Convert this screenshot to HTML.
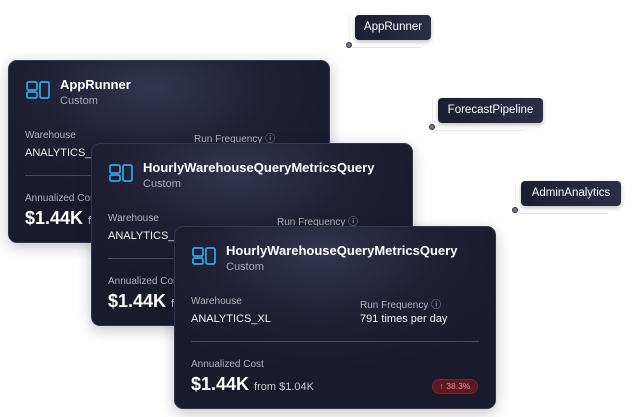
<!DOCTYPE html>
<html><head><style>
*{margin:0;padding:0;box-sizing:border-box}
body{width:635px;height:417px;background:#fff;position:relative;overflow:hidden;font-family:"Liberation Sans",sans-serif}
.card{position:absolute;width:322px;height:183px;border-radius:9px;background:radial-gradient(ellipse 220px 120px at 45% 15%,#33354f 0%,#1e1f33 55%,#191a2b 100%);box-shadow:0 4px 14px rgba(20,20,40,.25);color:#fff;border:1px solid #34364e}
.ic{position:absolute;left:17px;top:20px}
.t{position:absolute;left:51px;top:16px;font-size:13px;font-weight:bold}
.s{position:absolute;left:51px;top:34px;font-size:11px;color:#a6a8b6}
.l{position:absolute;top:69px;font-size:10px;color:#b0b2bf}
.v{position:absolute;top:86px;font-size:11px;color:#f2f2f6}
.hr{position:absolute;left:16px;right:16px;top:114px;height:1px;background:#4a4c62}
.al{position:absolute;left:16px;top:132px;font-size:10px;color:#b0b2bf}
.cost{position:absolute;left:16px;top:147px;font-size:18px;font-weight:bold}
.cost span{font-size:11px;font-weight:normal;color:#c4c5d0}
.badge{position:absolute;left:257px;top:152px;width:46px;height:15px;border-radius:8px;background:#5a1a22;border:1px solid #7a2630;color:#f08a8a;font-size:8.5px;text-align:center;line-height:13px}
.tag{position:absolute;height:25px;border-radius:4px;background:linear-gradient(90deg,#1c1d30,#2c2e48);color:#fff;font-size:11.5px;line-height:25px;text-align:center;box-shadow:0 2px 5px rgba(0,0,0,.25)}
.dot{position:absolute;width:6px;height:6px;border-radius:50%;border:1.5px solid #2a2c45;background:#777}
.vl{position:absolute;width:1px;background:#efeff4}
.hl{position:absolute;height:1px;background:#e6e6ee}
</style></head><body>

<div class="vl" style="left:349px;top:14px;height:30px"></div><div class="hl" style="left:352px;top:47px;width:70px"></div><div class="dot" style="left:346px;top:42px"></div>
<div class="tag" style="left:355px;top:15px;width:76px">AppRunner</div>
<div class="vl" style="left:432px;top:97px;height:30px"></div><div class="hl" style="left:435px;top:130px;width:90px"></div><div class="dot" style="left:429px;top:124px"></div>
<div class="tag" style="left:438px;top:98px;width:105px">ForecastPipeline</div>
<div class="vl" style="left:515px;top:180px;height:30px"></div><div class="hl" style="left:518px;top:213px;width:90px"></div><div class="dot" style="left:512px;top:207px"></div>
<div class="tag" style="left:521px;top:181px;width:100px">AdminAnalytics</div>

<div class="card" style="left:8px;top:60px">
<svg class="ic" width="24" height="18" viewBox="0 0 24 18" fill="none" stroke="#2fa8e8" stroke-width="1.7"><rect x="1" y="1" width="10" height="8" rx="1.5"/><rect x="1" y="11" width="10" height="6" rx="1.5"/><rect x="14" y="1" width="9" height="16" rx="1.5"/></svg>
<div class="t">AppRunner</div><div class="s">Custom</div>
<div class="l" style="left:16px">Warehouse</div><div class="l" style="left:185px">Run Frequency ⓘ</div>
<div class="v" style="left:16px">ANALYTICS_XL</div><div class="v" style="left:185px">791 times per day</div>
<div class="hr"></div><div class="al">Annualized Cost</div>
<div class="cost">$1.44K <span>from $1.04K</span></div>
</div>

<div class="card" style="left:91px;top:143px">
<svg class="ic" width="24" height="18" viewBox="0 0 24 18" fill="none" stroke="#2fa8e8" stroke-width="1.7"><rect x="1" y="1" width="10" height="8" rx="1.5"/><rect x="1" y="11" width="10" height="6" rx="1.5"/><rect x="14" y="1" width="9" height="16" rx="1.5"/></svg>
<div class="t">HourlyWarehouseQueryMetricsQuery</div><div class="s">Custom</div>
<div class="l" style="left:16px">Warehouse</div><div class="l" style="left:185px">Run Frequency ⓘ</div>
<div class="v" style="left:16px">ANALYTICS_XL</div><div class="v" style="left:185px">791 times per day</div>
<div class="hr"></div><div class="al">Annualized Cost</div>
<div class="cost">$1.44K <span>from $1.04K</span></div>
</div>

<div class="card" style="left:174px;top:226px">
<svg class="ic" width="24" height="18" viewBox="0 0 24 18" fill="none" stroke="#2fa8e8" stroke-width="1.7"><rect x="1" y="1" width="10" height="8" rx="1.5"/><rect x="1" y="11" width="10" height="6" rx="1.5"/><rect x="14" y="1" width="9" height="16" rx="1.5"/></svg>
<div class="t">HourlyWarehouseQueryMetricsQuery</div><div class="s">Custom</div>
<div class="l" style="left:16px">Warehouse</div><div class="l" style="left:185px">Run Frequency ⓘ</div>
<div class="v" style="left:16px">ANALYTICS_XL</div><div class="v" style="left:185px">791 times per day</div>
<div class="hr"></div><div class="al">Annualized Cost</div>
<div class="cost">$1.44K <span>from $1.04K</span></div>
<div class="badge">↑ 38.3%</div>
</div>
</body></html>
